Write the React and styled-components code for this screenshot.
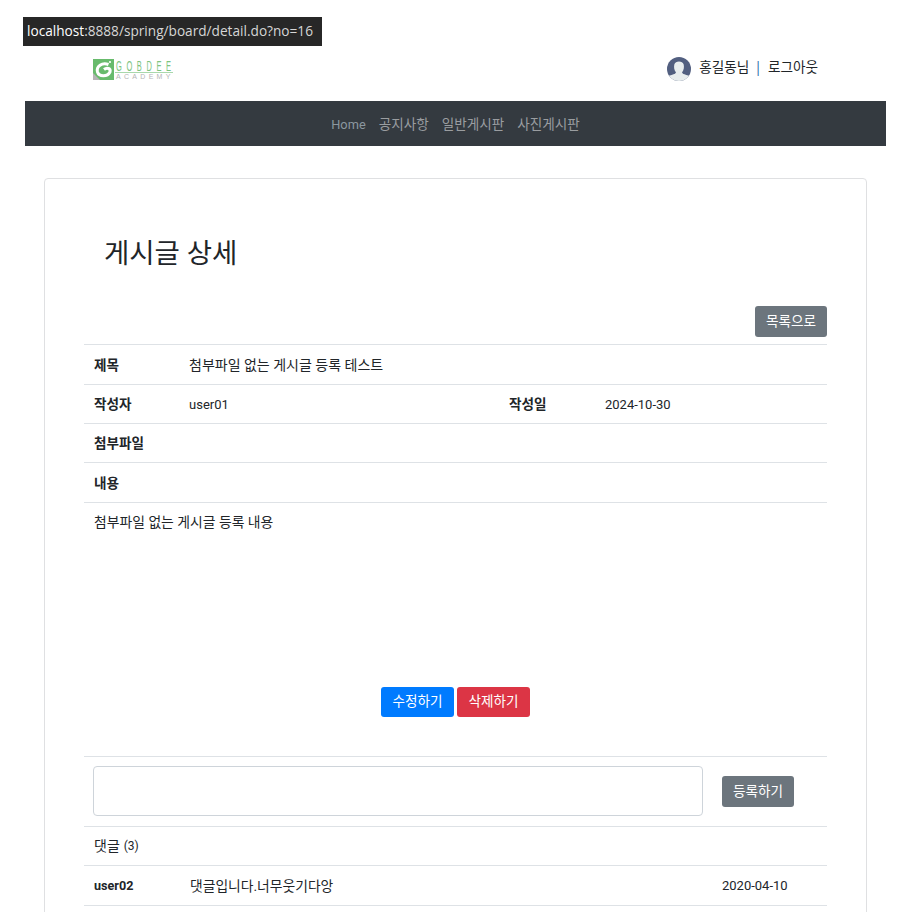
import React from "react";
import styled, { createGlobalStyle } from "styled-components";

const Global = createGlobalStyle`
  html, body { margin: 0; padding: 0; background: #fff; height: 912px; overflow: hidden; }
  body { font-family: Roboto, "Noto Sans CJK KR", sans-serif; color: #212529; font-size: 14px; }
`;
const Page = styled.div`position: relative; width: 903px; height: 912px; overflow: hidden; padding: 0 17px 0 25px; box-sizing: border-box;`;
const UrlTip = styled.div`
  position: absolute; left: 23px; top: 17px; width: 299px; height: 29px; box-sizing: border-box;
  background: #272727; color: #d6d6d6; font-family: "Open Sans", sans-serif; font-size: 13.65px; line-height: 27px; padding-left: 4px; white-space: nowrap;
`;
const UrlHost = styled.span`color: #fff;`;
const Header = styled.header`height: 101px; display: flex; justify-content: space-between; box-sizing: border-box; padding: 57px 68px 0 68px;`;
const Logo = styled.div`display: flex; gap: 1px; height: 22px; margin-top: 2px;`;
const LogoWords = styled.div`display: flex; flex-direction: column; width: 58px; font-family: "Liberation Sans", sans-serif;`;
const LogoTop = styled.span`
  display: block; width: 116px; height: 14px; box-sizing: border-box; font-size: 15px; line-height: 13px; letter-spacing: 9.2px;
  color: #7cc47f; border-bottom: 1px solid #a9d8ab; transform: scaleX(0.5); transform-origin: left top; white-space: nowrap; padding-left: 2px;
`;
const LogoBottom = styled.span`font-size: 7px; line-height: 8px; letter-spacing: 3.3px; color: #b5b5b5; padding-left: 1px; white-space: nowrap;`;
const UserBox = styled.div`display: flex; align-items: flex-start; font-size: 13.6px; line-height: 20px;`;
const UserText = styled.span`margin-left: 8px; white-space: nowrap;`;
const Sep = styled.span`margin: 0 6px 0 5px; color: #2a6ea8; font-family: "Open Sans", sans-serif; font-size: 14px;`;
const Nav = styled.nav`height: 45px; box-sizing: border-box; padding-bottom: 2px; background: #343a40; display: flex; justify-content: center; align-items: center; gap: 13px;`;
const NavLink = styled.a`
  font-size: ${p => (p.$first ? 12.8 : 13.6)}px; color: ${p => (p.$first ? "#8b979f" : "#9a9da0")}; white-space: nowrap;
  margin-top: ${p => (p.$first ? 3 : 0)}px;
`;
const Card = styled.main`
  margin: 32px 0 0 19px; width: 823px; height: 900px; box-sizing: border-box;
  border: 1px solid #dfe0e2; border-radius: 4px; padding: 0 39px;
`;
const Title = styled.h2`margin: 0; padding: 55px 0 0 20px; height: 127px; box-sizing: border-box; font-weight: 400; font-size: 27.5px; line-height: 40px;`;
const ListBar = styled.div`display: flex; justify-content: flex-end; height: 38px;`;
const Btn = styled.button`
  height: ${p => p.$h || 31}px; width: ${p => p.$w || 73}px; flex: none; padding: 0; border: 0; border-radius: 3px; color: #fff;
  background: ${p => p.$bg || "#6c757d"}; font: inherit; font-size: 13.6px; line-height: 1;
`;
const Row = styled.div`
  display: flex; align-items: center; height: ${p => p.$h || 39}px; box-sizing: border-box;
  border-top: 1px solid #dee2e6; padding: 0 0 ${p => p.$pb ?? 2}px ${p => p.$pad ?? 10}px; font-size: 14px; white-space: nowrap;
`;
const Label = styled.b`
  font-weight: 700; font-size: ${p => (p.$latin ? 12.6 : 13.6)}px; width: ${p => p.$w || 95}px; flex: none;
  margin-top: ${p => (p.$latin ? 2 : 0)}px;
`;
const Val = styled.span`
  width: ${p => (p.$w ? `${p.$w}px` : "auto")}; flex: none; font-size: ${p => (p.$latin ? 13 : p.$fs || 14)}px;
  margin-top: ${p => (p.$latin ? 2 : 0)}px;
`;
const ContentRow = styled.div`height: 185px; box-sizing: border-box; border-top: 1px solid #dee2e6; padding: 9px 10px 0; line-height: 20px; font-size: 13.85px;`;
const Actions = styled.div`display: flex; justify-content: center; gap: 3px; height: 69px;`;
const Textarea = styled.textarea`
  width: 610px; height: 50px; box-sizing: border-box; border: 1px solid #ced4da; border-radius: 4px;
  margin: 0 19px 1px 0; padding: 6px 12px; resize: none; outline: none; font: inherit; display: block; flex: none;
`;
const Count = styled.span`font-size: 12px; margin: 2px 0 0 4px;`;

export default function App() {
  return (
    <Page>
      <Global />
      <UrlTip><UrlHost>localhost</UrlHost>:8888/spring/board/detail.do?no=16</UrlTip>
      <Header>
        <Logo>
          <svg width="21" height="21" viewBox="0 0 21 21">
            <rect width="21" height="21" fill="#68bb6c" />
            <path d="M0 21 L0 14 L7 21 Z" fill="#b5b5b5" />
            <path d="M15.5 5.5 C9 3 3 7.5 4.5 13 C6 18 14.5 18 17 13 C18 9.5 14 8 11 10.5" fill="none" stroke="#fff" strokeWidth="3" />
            <circle cx="17" cy="3" r="1.1" fill="#fff" />
          </svg>
          <LogoWords>
            <LogoTop>GOBDEE</LogoTop>
            <LogoBottom>ACADEMY</LogoBottom>
          </LogoWords>
        </Logo>
        <UserBox>
          <svg width="24" height="24" viewBox="0 0 24 24">
            <defs><clipPath id="av"><circle cx="12" cy="12" r="12" /></clipPath></defs>
            <g clipPath="url(#av)">
              <rect width="24" height="24" fill="#525f80" />
              <path d="M0 24 L0 20 C3 17.5 8 18 9 15.5 C7 13 6.8 10 7.3 7.5 C8.3 3.5 15.7 3.5 16.7 7.5 C17.2 10 17 13 15 15.5 C16 18 21 17.5 24 20 L24 24 Z" fill="#e8edee" />
            </g>
          </svg>
          <UserText>홍길동님<Sep>|</Sep>로그아웃</UserText>
        </UserBox>
      </Header>
      <Nav>
        <NavLink $first>Home</NavLink>
        <NavLink>공지사항</NavLink>
        <NavLink>일반게시판</NavLink>
        <NavLink>사진게시판</NavLink>
      </Nav>
      <Card>
        <Title>게시글 상세</Title>
        <ListBar><Btn $w={72}>목록으로</Btn></ListBar>
        <Row $h={40}><Label>제목</Label><Val>첨부파일 없는 게시글 등록 테스트</Val></Row>
        <Row><Label>작성자</Label><Val $w={320} $latin>user01</Val><Label $w={96}>작성일</Label><Val $latin>2024-10-30</Val></Row>
        <Row><Label>첨부파일</Label></Row>
        <Row $h={40}><Label>내용</Label></Row>
        <ContentRow>첨부파일 없는 게시글 등록 내용</ContentRow>
        <Actions>
          <Btn $bg="#007bff" $h={30}>수정하기</Btn>
          <Btn $bg="#dc3545" $h={30}>삭제하기</Btn>
        </Actions>
        <Row $h={70} $pad={9} $pb={0}>
          <Textarea />
          <Btn $w={72}>등록하기</Btn>
        </Row>
        <Row $h={39}>댓글<Count>(3)</Count></Row>
        <Row $h={40}><Label $w={96} $latin>user02</Label><Val $w={532} $fs={13.8}>댓글입니다.너무웃기다앙</Val><Val $latin>2020-04-10</Val></Row>
        <Row />
      </Card>
    </Page>
  );
}
